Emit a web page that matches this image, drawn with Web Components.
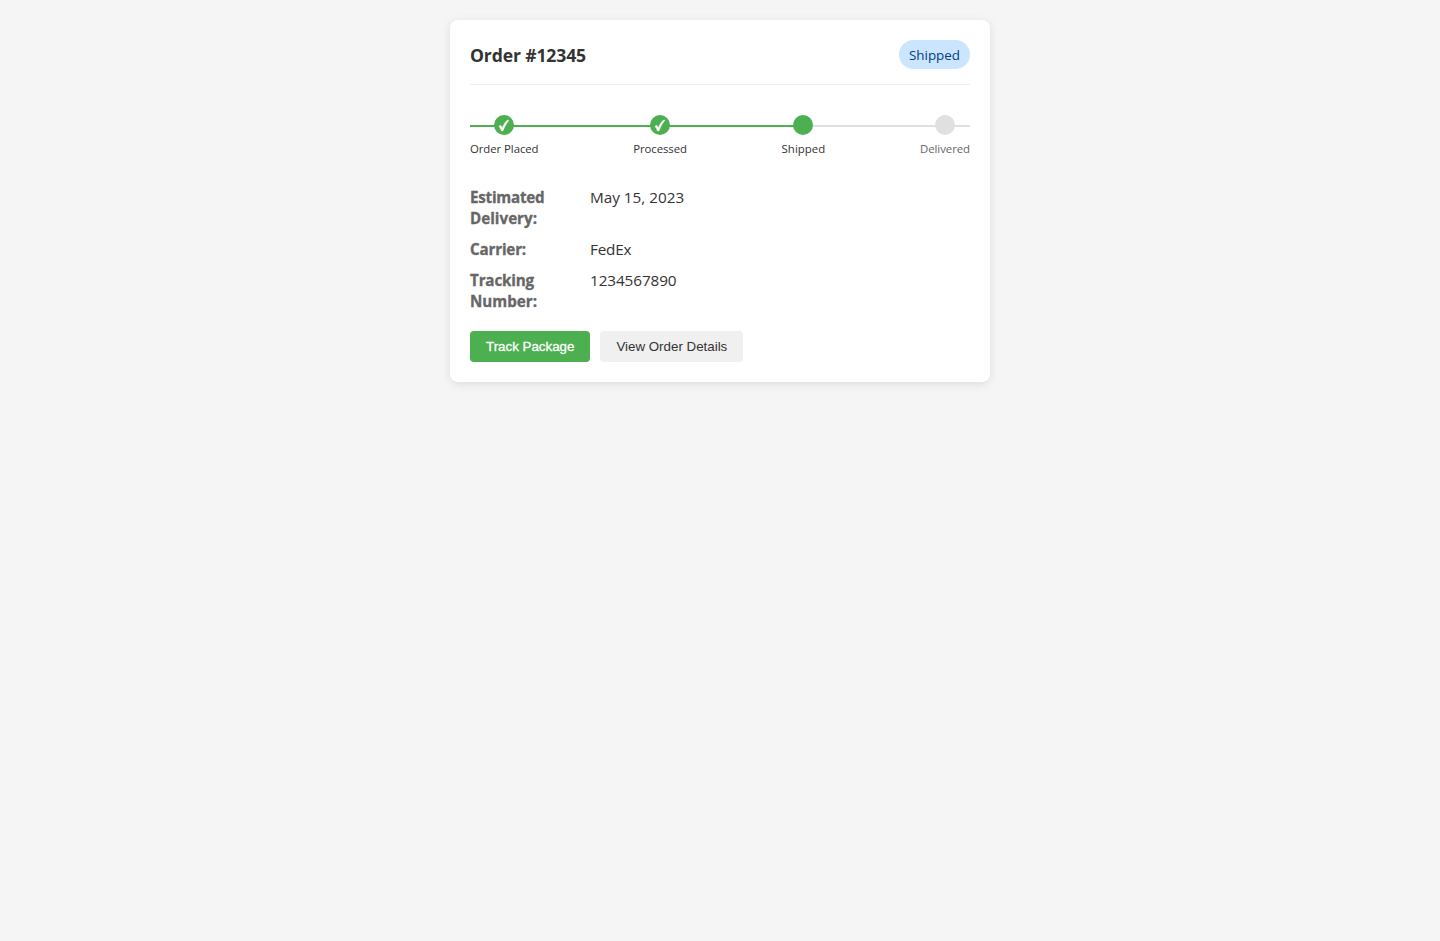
<!DOCTYPE html>
<html lang="en">
<head>
<meta charset="utf-8">
<title>Order status</title>
<style>
body { margin: 0; padding: 20px; background: #f5f5f5; color: #333; font-family: "Open Sans", "Noto Sans", sans-serif; }
</style>
</head>
<body>
<order-card>
  <fit-text slot="title" width="116">Order #12345</fit-text>
  <status-badge slot="status"><fit-text width="51">Shipped</fit-text></status-badge>
  <order-progress>
    <order-step state="done"><fit-text width="68.5">Order Placed</fit-text></order-step>
    <order-step state="done"><fit-text width="53.5">Processed</fit-text></order-step>
    <order-step state="active"><fit-text width="43.6">Shipped</fit-text></order-step>
    <order-step><fit-text width="50">Delivered</fit-text></order-step>
  </order-progress>
  <order-details>
    <detail-row><fit-text slot="label" width="74.5">Estimated</fit-text><fit-text slot="label" width="67">Delivery:</fit-text><fit-text width="94.2">May 15, 2023</fit-text></detail-row>
    <detail-row><fit-text slot="label" width="56">Carrier:</fit-text><fit-text width="41.2">FedEx</fit-text></detail-row>
    <detail-row><fit-text slot="label" width="64">Tracking</fit-text><fit-text slot="label" width="67">Number:</fit-text><fit-text width="86.5">1234567890</fit-text></detail-row>
  </order-details>
  <action-button slot="actions" primary>Track Package</action-button>
  <action-button slot="actions">View Order Details</action-button>
</order-card>
<script>
const define = (name, html, setup) => customElements.define(name, class extends HTMLElement {
  connectedCallback() {
    if (!this.shadowRoot) {
      const t = document.createElement('template');
      t.innerHTML = html;
      this.attachShadow({ mode: 'open' }).append(t.content.cloneNode(true));
    }
    if (setup) setup(this);
  }
});

define('order-card', `<style>
:host { display: block; box-sizing: border-box; width: 540px; height: 362px; margin: 0 auto; padding: 20px; background: #fff; border-radius: 8px; box-shadow: 0 2px 10px rgba(0,0,0,.1); }
header { display: flex; justify-content: space-between; align-items: center; height: 29px; padding-bottom: 15px; border-bottom: 1px solid #eee; }
h2 { margin: 0; font-size: 17.6px; line-height: 24px; font-weight: 700; }
footer { display: flex; gap: 10px; margin-top: 19px; }
</style><header><h2><slot name="title"></slot></h2><slot name="status"></slot></header><slot></slot><footer><slot name="actions"></slot></footer>`);

define('status-badge', `<style>
:host { display: block; box-sizing: border-box; height: 29px; padding: 5px 10px; border-radius: 15px; background: #cce5ff; color: #004085; font-size: 13.4px; line-height: 20px; }
</style><slot></slot>`);

define('order-progress', `<style>
:host { display: flex; justify-content: space-between; margin-top: 30px; height: 42px; background: linear-gradient(#4caf50,#4caf50) 0 10px / 66% 2px no-repeat, linear-gradient(#e0e0e0,#e0e0e0) 0 10px / 100% 2px no-repeat; }
</style><slot></slot>`);

define('order-step', `<style>
:host { display: flex; flex-direction: column; align-items: center; color: #666; font-size: 11.4px; line-height: 18px; }
:host([state]) { color: #333; }
i { display: block; flex: none; width: 20px; height: 20px; margin-bottom: 5px; border-radius: 50%; background: #e0e0e0; }
:host([state]) i { background: #4caf50; }
svg { display: none; }
:host([state="done"]) svg { display: block; }
</style><i><svg width="20" height="20" viewBox="0 0 20 20"><path d="M5 11.2 6.8 10.2 8.3 12.7C9.6 9.6 11.2 7.2 13.2 5.2H15C12.3 8.4 10.5 11.8 9 15.9H7.5C6.8 14.2 6 12.6 5 11.2Z" fill="#fff" stroke="#fff" stroke-width=".4"/></svg></i><slot></slot>`);

define('order-details', `<style>
:host { display: flex; flex-direction: column; gap: 10px; margin-top: 30px; }
</style><slot></slot>`);

define('detail-row', `<style>
:host { display: grid; grid-template-columns: 120px 1fr; font-size: 15.3px; line-height: 21px; }
.label { color: #666; font-weight: 700; font-size: 15.2px; -webkit-text-stroke: .3px #666; }
</style><div class="label"><slot name="label"></slot></div><div><slot></slot></div>`);

define('action-button', `<style>
:host { display: block; }
button { display: block; height: 31px; margin: 0; padding: 0 16px; border: 0; border-radius: 4px; background: #f0f0f0; color: #333; font: 13.333px/31px "Liberation Sans", Arial, sans-serif; white-space: nowrap; }
:host([primary]) button { background: #4caf50; color: #fff; -webkit-text-stroke: .3px #fff; }
</style><button><slot></slot></button>`);

// Spreads a run of text over the width given in its attribute.
define('fit-text', `<style>
:host { display: block; width: max-content; white-space: nowrap; }
</style><slot></slot>`, el => {
  const target = +el.getAttribute('width');
  const natural = el.getBoundingClientRect().width;
  el.style.letterSpacing = ((target - natural) / el.textContent.length) + 'px';
});
</script>
</body>
</html>
